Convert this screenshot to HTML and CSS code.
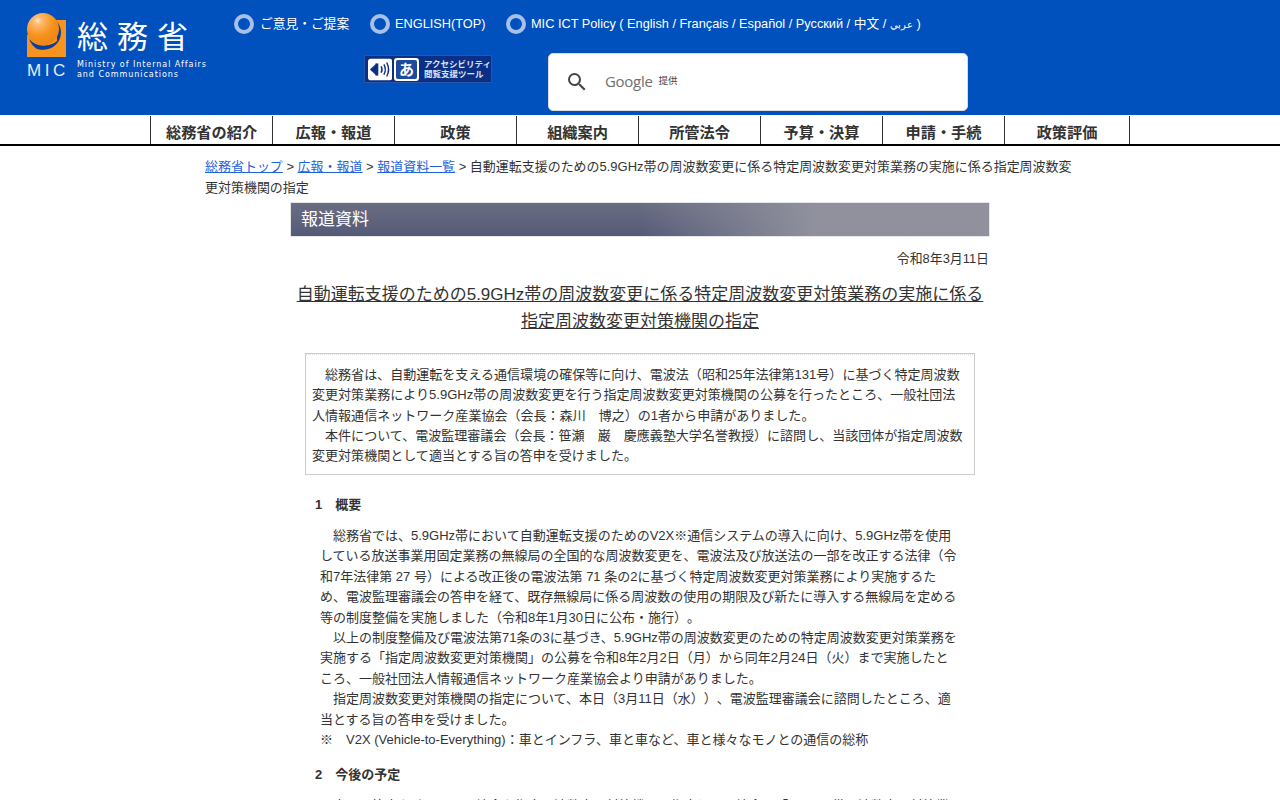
FILE: index.html
```html
<!DOCTYPE html>
<html lang="ja">
<head>
<meta charset="utf-8">
<title>総務省 報道資料</title>
<link rel="stylesheet" href="styles.css">
</head>
<body>
<header class="masthead">
  <div class="brand">
    <div class="mark">
      <svg class="mark-img" width="40" height="44" viewBox="0 0 40 44">
        <defs>
          <radialGradient id="ball" cx="0.34" cy="0.24" r="0.85">
            <stop offset="0" stop-color="#ffe6c8"/>
            <stop offset="0.14" stop-color="#fdbb70"/>
            <stop offset="0.55" stop-color="#f7931e"/>
            <stop offset="1" stop-color="#ea8214"/>
          </radialGradient>
        </defs>
        <path d="M16 7 H39 V44 H0 V16Z" fill="#f7931e"/>
        <circle cx="17" cy="19.500" r="17" fill="#0b3f9c"/>
        <path d="M0 22 A17 17 0 0 0 2 30 Q16 40 30 28 L30 16 H16Z" fill="#f7931e"/>
        <circle cx="16" cy="16" r="16" fill="url(#ball)"/>
        <path d="M2 26 Q12 37 28 30 Q20 39 10 36 Q5 33 2 26Z" fill="#0b3f9c"/>
      </svg>
      <div class="mark-name">MIC</div>
    </div>
    <div class="brand-text">
      <div class="brand-ja">総務省</div>
      <div class="brand-en">Ministry of Internal Affairs<br>and Communications</div>
    </div>
  </div>
  <div class="tools">
    <ul class="toplinks">
      <li class="toplink first"><span class="ring"></span><a href="#">ご意見・ご提案</a></li>
      <li class="toplink second"><span class="ring"></span><a href="#">ENGLISH(TOP)</a></li>
      <li class="toplink"><span class="ring"></span><a href="#">MIC ICT Policy ( English / Français / Español / Русский / 中文 / <span class="ar">عربي</span> )</a></li>
    </ul>
    <div class="toolrow">
      <div class="a11y">
        <svg class="a11y-ico" width="26" height="23" viewBox="0 0 26 23">
          <rect width="26" height="23" rx="3" fill="#fff"/>
          <path d="M2 11.500 L9 5 V18Z" fill="#0b2f86"/>
          <rect x="8" y="5" width="3" height="13" fill="#0b2f86"/>
          <path d="M14 8 Q16 11.500 14 15 M17 6 Q20 11.500 17 17 M20 4 Q24 11.500 20 19" fill="none" stroke="#0b2f86" stroke-width="1.500"/>
        </svg>
        <div class="a11y-a"><span>あ</span></div>
        <div class="a11y-txt">アクセシビリティ<br>閲覧支援ツール</div>
      </div>
      <div class="search">
        <svg class="search-ico" width="24" height="24" viewBox="0 0 24 24">
          <path d="M15.500 14h-.79l-.28-.27A6.470 6.470 0 0 0 16 9.500 6.500 6.500 0 1 0 9.500 16c1.610 0 3.090-.59 4.230-1.570l.27.28v.79l5 4.990L20.490 19l-4.990-5zm-6 0C7.010 14 5 11.990 5 9.500S7.010 5 9.500 5 14 7.010 14 9.500 11.990 14 9.500 14z" fill="#444"/>
        </svg>
        <span class="google">Google</span><span class="teikyo">提供</span>
      </div>
    </div>
  </div>
</header>
<nav class="gnav">
  <a class="gnav-item" href="#">総務省の紹介</a>
  <a class="gnav-item" href="#">広報・報道</a>
  <a class="gnav-item" href="#">政策</a>
  <a class="gnav-item" href="#">組織案内</a>
  <a class="gnav-item" href="#">所管法令</a>
  <a class="gnav-item" href="#">予算・決算</a>
  <a class="gnav-item" href="#">申請・手続</a>
  <a class="gnav-item" href="#">政策評価</a>
</nav>
<div class="crumbs"><a href="#">総務省トップ</a> &gt; <a href="#">広報・報道</a> &gt; <a href="#">報道資料一覧</a> &gt; 自動運転支援のための5.9GHz帯の周波数変更に係る特定周波数変更対策業務の実施に係る指定周波数変更対策機関の指定</div>
<main class="content">
  <h1 class="band">報道資料</h1>
  <p class="date">令和8年3月11日</p>
  <h2 class="title">自動運転支援のための5.9GHz帯の周波数変更に係る特定周波数変更対策業務の実施に係る<br>指定周波数変更対策機関の指定</h2>
  <div class="lead">
    　総務省は、自動運転を支える通信環境の確保等に向け、電波法（昭和25年法律第131号）に基づく特定周波数変更対策業務により5.9GHz帯の周波数変更を行う指定周波数変更対策機関の公募を行ったところ、一般社団法人情報通信ネットワーク産業協会（会長：森川　博之）の1者から申請がありました。<br>
    　本件について、電波監理審議会（会長：笹瀬　巌　慶應義塾大学名誉教授）に諮問し、当該団体が指定周波数変更対策機関として適当とする旨の答申を受けました。
  </div>
  <h3 class="sec">1　概要</h3>
  <p class="body">
    　総務省では、5.9GHz帯において自動運転支援のためのV2X※通信システムの導入に向け、5.9GHz帯を使用している放送事業用固定業務の無線局の全国的な周波数変更を、電波法及び放送法の一部を改正する法律（令和7年法律第 27 号）による改正後の電波法第 71 条の2に基づく特定周波数変更対策業務により実施するため、電波監理審議会の答申を経て、既存無線局に係る周波数の使用の期限及び新たに導入する無線局を定める等の制度整備を実施しました（令和8年1月30日に公布・施行）。<br>
    　以上の制度整備及び電波法第71条の3に基づき、5.9GHz帯の周波数変更のための特定周波数変更対策業務を実施する「指定周波数変更対策機関」の公募を令和8年2月2日（月）から同年2月24日（火）まで実施したところ、一般社団法人情報通信ネットワーク産業協会より申請がありました。<br>
    　指定周波数変更対策機関の指定について、本日（3月11日（水））、電波監理審議会に諮問したところ、適当とする旨の答申を受けました。<br>
    ※　V2X (Vehicle-to-Everything)：車とインフラ、車と車など、車と様々なモノとの通信の総称
  </p>
  <h3 class="sec">2　今後の予定</h3>
  <p class="body">
    　本日の答申を踏まえ、同協会を指定周波数変更対策機関に指定し、同協会は「5.9GHz帯周波数変更対策業務」を実施する予定です。
  </p>
</main>
</body>
</html>
```
FILE: styles.css
```css
* { box-sizing: border-box; }
html, body { margin: 0; padding: 0; }
body {
  background: #fff;
  color: #333;
  font-family: "Liberation Sans", "Noto Sans CJK JP", sans-serif;
  font-size: 13px;
  line-height: 20.4px;
  overflow-x: hidden;
  text-spacing-trim: space-all;
}
a { color: inherit; }

.masthead {
  height: 115px;
  background: #0050be;
  color: #fff;
  display: flex;
  padding-left: 27px;
}
.brand { width: 207px; display: flex; padding-top: 13px; }
.mark { width: 50px; }
.mark-img { display: block; }
.mark-name {
  margin-top: 4px;
  font-size: 17px;
  line-height: 20px;
  letter-spacing: 3.5px;
  color: #e6edf8;
  white-space: nowrap;
}
.brand-text { padding-top: 9px; }
.brand-ja {
  font-size: 31px;
  line-height: 32px;
  letter-spacing: 9px;
  white-space: nowrap;
}
.brand-en {
  margin-top: 6px;
  font-family: "DejaVu Sans", sans-serif;
  font-size: 8px;
  line-height: 10px;
  letter-spacing: .95px;
  white-space: nowrap;
}
.tools { flex: 1; }
.toplinks {
  list-style: none;
  margin: 0;
  padding: 14px 0 0;
  display: flex;
  height: 53px;
  font-size: 12.750px;
}
.toplink { display: flex; align-items: flex-start; color: #fff; white-space: nowrap; line-height: 20px; }
.toplink a { text-decoration: none; }
.toplink.first { width: 136px; }
.toplink.second { width: 136px; }
.ring {
  width: 20px;
  height: 20px;
  border: 4px solid #a9c1e9;
  border-radius: 50%;
  margin-right: 5px;
  flex: none;
}
.first .ring { margin-right: 6px; }
.ar { font-size: 10px; }
.toolrow { display: flex; align-items: flex-start; }
.a11y {
  margin: 2px 0 0 130px;
  width: 128px;
  height: 28px;
  background: #0b2f86;
  border: 1px solid #2a56a8;
  display: flex;
  align-items: center;
  padding-left: 3px;
  gap: 2px;
}
.a11y-a {
  width: 26px;
  height: 23px;
  background: #fff;
  border-radius: 3px;
  padding: 2px;
  display: flex;
}
.a11y-a span {
  flex: 1;
  background: #1f4a9c;
  color: #fff;
  font-size: 15px;
  font-weight: 700;
  line-height: 19px;
  text-align: center;
  border-radius: 2px;
}
.a11y-txt {
  margin-left: 3px;
  font-size: 8.500px;
  line-height: 10px;
  font-weight: 700;
  color: #dbe4f5;
  white-space: nowrap;
}
.search {
  margin-left: 56px;
  width: 420px;
  height: 58px;
  background: #fff;
  border: 1px solid #dadce0;
  border-radius: 5px;
  display: flex;
  align-items: center;
  padding-left: 16px;
}
.search-ico { flex: none; }
.google {
  margin: -2px 0 0 16px;
  font-family: "Open Sans", sans-serif;
  font-size: 15px;
  color: #6f6f6f;
  letter-spacing: -.3px;
}
.teikyo { margin: -2px 0 0 6px; font-size: 9.500px; color: #444; }

.gnav {
  height: 31px;
  border-bottom: 2px solid #000;
  display: flex;
  justify-content: center;
  padding-top: 1px;
}
.gnav-item {
  width: 122px;
  border-left: 1px solid #333;
  text-align: center;
  font-size: 15.200px;
  font-weight: 700;
  line-height: 33px;
  height: 28px;
  color: #333;
  text-decoration: none;
}
.gnav-item:last-child { width: 126px; border-right: 1px solid #333; }

.crumbs {
  width: 870px;
  margin: 10px 0 0 205px;
  font-size: 12.980px;
  line-height: 21px;
}
.crumbs a { color: #1f62e0; }

.content { width: 698px; margin: 5px 0 0 291px; }
.band {
  margin: 0;
  height: 33px;
  padding-left: 10px;
  color: #fff;
  font-size: 17px;
  font-weight: 400;
  line-height: 33px;
  box-shadow: 0 0 0 1px #e6e6ea;
  background:
    linear-gradient(90deg, rgba(144,145,157,0) 50%, rgba(144,145,157,1) 75%),
    linear-gradient(180deg, #6a6d82, #555a78);
}
.date { margin: 13px 0 0; text-align: right; font-size: 12.900px; line-height: 20px; }
.title {
  margin: 12px 0 0;
  font-size: 17px;
  font-weight: 400;
  line-height: 27px;
  text-align: center;
  text-decoration: underline;
}
.lead {
  margin: 18px 14px 0;
  height: 122px;
  padding: 11px 10px 0 6px;
  border: 1px solid #ccc;
  font-size: 13.040px;
  line-height: 20.300px;
  background: repeating-linear-gradient(90deg, #ddd 0 1px, transparent 1px 2px) top / 100% 1px no-repeat;
}
.sec {
  margin: 20px 0 0 24px;
  font-size: 13px;
  font-weight: 700;
  line-height: 20px;
}
.body {
  margin: 11px 29px 0;
  width: 640px;
}
.body + .sec { margin-top: 15px; }
```
